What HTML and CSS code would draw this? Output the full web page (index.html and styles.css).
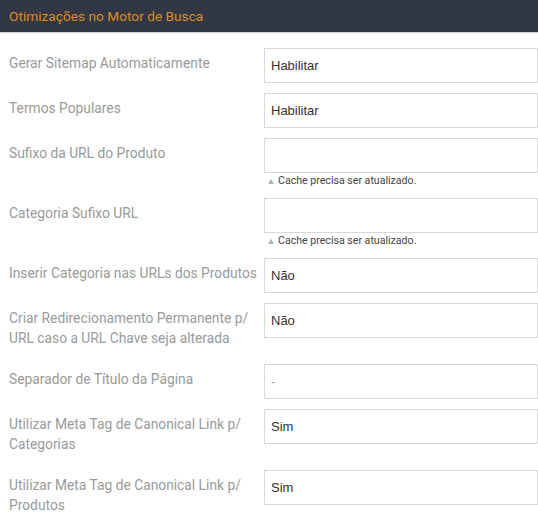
FILE: index.html
```html
<!DOCTYPE html>
<html lang="pt">
<head>
<meta charset="utf-8">
<link rel="stylesheet" href="styles.css">
</head>
<body>
<div class="panel">
  <div class="panel-head">Otimizações no Motor de Busca</div>
  <div class="form">
    <div class="row">
      <div class="label">Gerar Sitemap Automaticamente</div>
      <div class="field"><div class="input">Habilitar</div></div>
    </div>
    <div class="row">
      <div class="label">Termos Populares</div>
      <div class="field"><div class="input">Habilitar</div></div>
    </div>
    <div class="row">
      <div class="label">Sufixo da URL do Produto</div>
      <div class="field"><div class="input"></div><div class="hint"><span class="tri">▲</span>Cache precisa ser atualizado.</div></div>
    </div>
    <div class="row">
      <div class="label">Categoria Sufixo URL</div>
      <div class="field"><div class="input"></div><div class="hint"><span class="tri">▲</span>Cache precisa ser atualizado.</div></div>
    </div>
    <div class="row">
      <div class="label">Inserir Categoria nas URLs dos Produtos</div>
      <div class="field"><div class="input">Não</div></div>
    </div>
    <div class="row">
      <div class="label">Criar Redirecionamento Permanente p/ URL caso a URL Chave seja alterada</div>
      <div class="field"><div class="input">Não</div></div>
    </div>
    <div class="row">
      <div class="label">Separador de Título da Página</div>
      <div class="field"><div class="input placeholder">-</div></div>
    </div>
    <div class="row">
      <div class="label">Utilizar Meta Tag de Canonical Link p/ Categorias</div>
      <div class="field"><div class="input">Sim</div></div>
    </div>
    <div class="row">
      <div class="label">Utilizar Meta Tag de Canonical Link p/ Produtos</div>
      <div class="field"><div class="input">Sim</div></div>
    </div>
  </div>
</div>
</body>
</html>
```
FILE: styles.css
```css
html, body {
  margin: 0;
  padding: 0;
  background: #ffffff;
}
.panel {
  width: 538px;
  font-family: Roboto, "Liberation Sans", sans-serif;
}
.panel-head {
  height: 32px;
  background: #313743;
  color: #db8c2b;
  font-size: 13.7px;
  line-height: 32px;
  padding-left: 9px;
  border-bottom: 1px solid #cfcfcf;
}
.form {
  padding-top: 15px;
}
.row {
  display: flex;
  margin-bottom: 10px;
}
.label {
  width: 264px;
  flex: none;
  padding: 5px 0 6px 9px;
  box-sizing: border-box;
  font-size: 13.8px;
  line-height: 20px;
  color: #9a9a9a;
}
.field {
  flex: 1;
}
.input {
  height: 35px;
  box-sizing: border-box;
  border: 1px solid #d9d9d9;
  padding: 0 6px;
  font-family: "Liberation Sans", Arial, sans-serif;
  font-size: 13px;
  line-height: 33px;
  color: #333333;
}
.input.placeholder {
  color: #999999;
}
.hint {
  height: 15px;
  font-size: 10.6px;
  line-height: 15px;
  color: #444444;
}
.tri {
  display: inline-block;
  font-size: 9px;
  color: #b0b0b0;
  width: 14px;
  text-align: center;
  vertical-align: 0;
}
```
